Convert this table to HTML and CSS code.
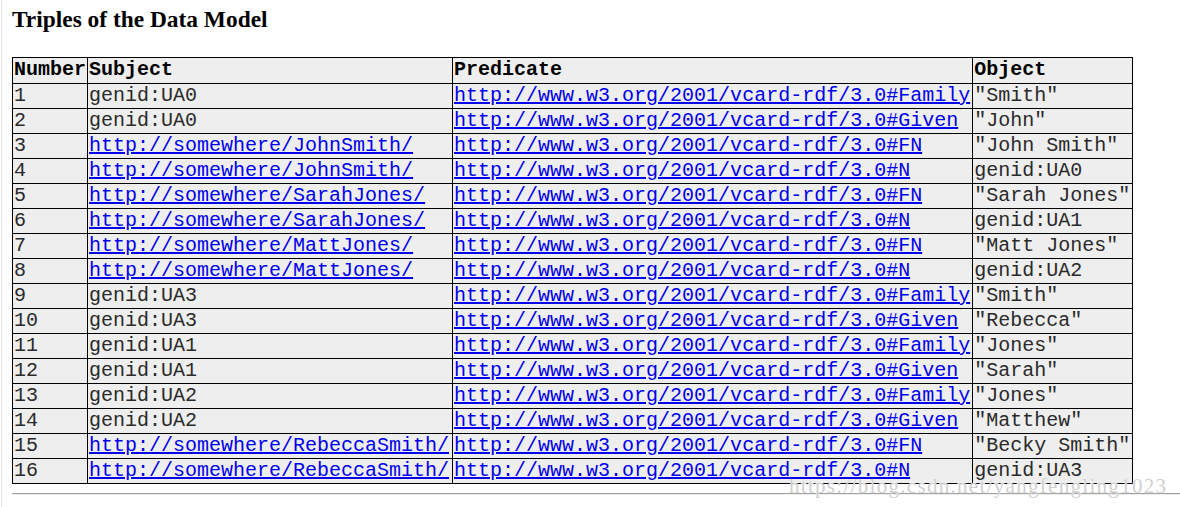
FILE: index.html
```html
<!DOCTYPE html>
<html lang="en">
<head>
    <meta charset="UTF-8">
    <title>Triples of the Data Model</title>
    <link rel="stylesheet" href="styles.css">
</head>
<body>
    <div class="page">
        <h3 class="title">Triples of the Data Model</h3>
        <table class="triples">
            <tr><th>Number</th><th class="subj">Subject</th><th>Predicate</th><th>Object</th></tr>
            <tr><td>1</td><td class="subj">genid:UA0</td><td><a href="#">http://www.w3.org/2001/vcard-rdf/3.0#Family</a></td><td>"Smith"</td></tr>
            <tr><td>2</td><td class="subj">genid:UA0</td><td><a href="#">http://www.w3.org/2001/vcard-rdf/3.0#Given</a></td><td>"John"</td></tr>
            <tr><td>3</td><td class="subj"><a href="#">http://somewhere/JohnSmith/</a></td><td><a href="#">http://www.w3.org/2001/vcard-rdf/3.0#FN</a></td><td>"John Smith"</td></tr>
            <tr><td>4</td><td class="subj"><a href="#">http://somewhere/JohnSmith/</a></td><td><a href="#">http://www.w3.org/2001/vcard-rdf/3.0#N</a></td><td>genid:UA0</td></tr>
            <tr><td>5</td><td class="subj"><a href="#">http://somewhere/SarahJones/</a></td><td><a href="#">http://www.w3.org/2001/vcard-rdf/3.0#FN</a></td><td>"Sarah Jones"</td></tr>
            <tr><td>6</td><td class="subj"><a href="#">http://somewhere/SarahJones/</a></td><td><a href="#">http://www.w3.org/2001/vcard-rdf/3.0#N</a></td><td>genid:UA1</td></tr>
            <tr><td>7</td><td class="subj"><a href="#">http://somewhere/MattJones/</a></td><td><a href="#">http://www.w3.org/2001/vcard-rdf/3.0#FN</a></td><td>"Matt Jones"</td></tr>
            <tr><td>8</td><td class="subj"><a href="#">http://somewhere/MattJones/</a></td><td><a href="#">http://www.w3.org/2001/vcard-rdf/3.0#N</a></td><td>genid:UA2</td></tr>
            <tr><td>9</td><td class="subj">genid:UA3</td><td><a href="#">http://www.w3.org/2001/vcard-rdf/3.0#Family</a></td><td>"Smith"</td></tr>
            <tr><td>10</td><td class="subj">genid:UA3</td><td><a href="#">http://www.w3.org/2001/vcard-rdf/3.0#Given</a></td><td>"Rebecca"</td></tr>
            <tr><td>11</td><td class="subj">genid:UA1</td><td><a href="#">http://www.w3.org/2001/vcard-rdf/3.0#Family</a></td><td>"Jones"</td></tr>
            <tr><td>12</td><td class="subj">genid:UA1</td><td><a href="#">http://www.w3.org/2001/vcard-rdf/3.0#Given</a></td><td>"Sarah"</td></tr>
            <tr><td>13</td><td class="subj">genid:UA2</td><td><a href="#">http://www.w3.org/2001/vcard-rdf/3.0#Family</a></td><td>"Jones"</td></tr>
            <tr><td>14</td><td class="subj">genid:UA2</td><td><a href="#">http://www.w3.org/2001/vcard-rdf/3.0#Given</a></td><td>"Matthew"</td></tr>
            <tr><td>15</td><td class="subj"><a href="#">http://somewhere/RebeccaSmith/</a></td><td><a href="#">http://www.w3.org/2001/vcard-rdf/3.0#FN</a></td><td>"Becky Smith"</td></tr>
            <tr><td>16</td><td class="subj"><a href="#">http://somewhere/RebeccaSmith/</a></td><td><a href="#">http://www.w3.org/2001/vcard-rdf/3.0#N</a></td><td>genid:UA3</td></tr>
        </table>
        <hr class="rule">
        <div class="watermark">https://blog.csdn.net/yangfengling1023</div>
    </div>
</body>
</html>
```

FILE: styles.css
```css
html, body {
    margin: 0;
    padding: 0;
    background: #fff;
}

.page {
    position: relative;
    min-height: 507px;
    margin-left: 1px;
    border-left: 1px solid #e4e4e4;
    padding-left: 10px;
    overflow: hidden;
}

.title {
    font-family: 'Liberation Serif', serif;
    font-size: 23.4px;
    font-weight: bold;
    color: #000;
    margin: 0;
    padding-top: 6px;
    line-height: 26px;
    height: 51px;
}

.triples {
    border-collapse: collapse;
    font-family: 'Liberation Mono', monospace;
    font-size: 20px;
    line-height: 22px;
}

.triples th,
.triples td {
    border: 1px solid #000;
    background: #eee;
    padding: 1px 2px 1px 1px;
    text-align: left;
    white-space: nowrap;
    vertical-align: top;
}

.triples th:first-child,
.triples td:first-child {
    padding-right: 1px;
}

.triples .subj {
    padding-right: 3px;
}

.triples th {
    color: #000;
    font-weight: bold;
    padding-bottom: 2px;
}

.triples td {
    color: #2a2a2a;
}

.triples a {
    color: #0000ee;
    text-decoration: underline;
}

.rule {
    margin: 9px 0 0 0;
    border: none;
    border-top: 1px solid #a0a0a0;
    border-bottom: 1px solid #eee;
    height: 0;
}

.watermark {
    position: absolute;
    left: 787px;
    top: 474px;
    font-family: 'Liberation Serif', serif;
    font-size: 21px;
    letter-spacing: 1.3px;
    color: #d0d0d0;
    text-shadow: 0 0 1px #fff;
    white-space: nowrap;
}
```
